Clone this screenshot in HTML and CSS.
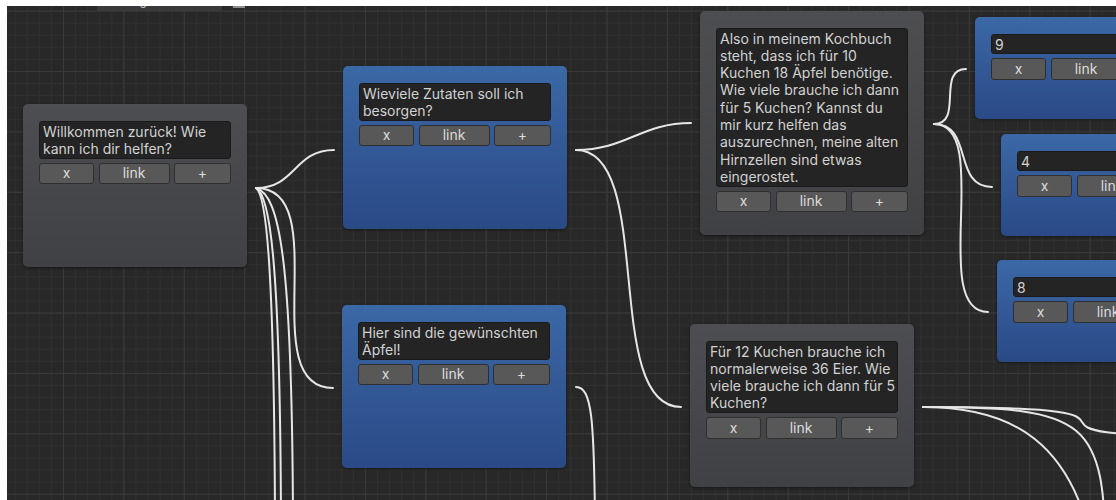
FILE: index.html
```html
<!DOCTYPE html>
<html lang="de">
<head>
<meta charset="utf-8">
<title>Dialog Graph</title>
<link rel="stylesheet" href="styles.css">
</head>
<body>
<div class="graph-view">
  <svg class="edges" viewBox="7 6 1109 494" width="1109" height="494" aria-hidden="true">
    <g class="edge">
      <!-- Willkommen -> outputs -->
      <path d="M256 188 C296 188 294 150 334 150"/>
      <path d="M256 188 C336 188 253 388 333 388"/>
      <path d="M256 188 C266 195 274 260 275 520"/>
      <path d="M256 188 C270 195 280 260 281 520"/>
      <path d="M256 188 C280 195 292 260 293 520"/>
      <!-- Zutaten -> outputs -->
      <path d="M576 150 C626 150 641 123 691 123"/>
      <path d="M576 150 C656 150 601 407 681 407"/>
      <!-- Äpfel -> output -->
      <path d="M576 387 C592 387 594 420 595 520"/>
      <!-- Kochbuch -> answers -->
      <path d="M934 124 C964 124 936 69 966 69"/>
      <path d="M934 124 C974 124 952 187 992 187"/>
      <path d="M934 124 C994 124 928 312 988 312"/>
      <!-- Eier -> outputs -->
      <path d="M923 407 C1223 407 941 437 1241 437"/>
      <path d="M923 407 C1010 407 1075 440 1095 560"/>
      <path d="M923 407 C1090 407 1104 420 1106 560"/>
    </g>
  </svg>

  <div class="toolbar-field"><span>Dialog</span></div>
  <div class="toolbar-knob"></div>

  <div class="node node--gray n-welcome">
    <div class="node__text">Willkommen zurück! Wie kann ich dir helfen?</div>
    <div class="node__actions"><button class="btn">x</button><button class="btn">link</button><button class="btn">+</button></div>
  </div>

  <div class="node node--blue n-zutaten">
    <div class="node__text">Wieviele Zutaten soll ich besorgen?</div>
    <div class="node__actions"><button class="btn">x</button><button class="btn">link</button><button class="btn">+</button></div>
  </div>

  <div class="node node--blue n-aepfel">
    <div class="node__text">Hier sind die gewünschten Äpfel!</div>
    <div class="node__actions"><button class="btn">x</button><button class="btn">link</button><button class="btn">+</button></div>
  </div>

  <div class="node node--gray node--tall n-kochbuch">
    <div class="node__text">Also in meinem Kochbuch steht, dass ich für 10 Kuchen 18 Äpfel benötige. Wie viele brauche ich dann für 5 Kuchen? Kannst du mir kurz helfen das auszurechnen, meine alten Hirnzellen sind etwas eingerostet.</div>
    <div class="node__actions"><button class="btn">x</button><button class="btn">link</button><button class="btn">+</button></div>
  </div>

  <div class="node node--gray n-eier">
    <div class="node__text">Für 12 Kuchen brauche ich normalerweise 36 Eier. Wie viele brauche ich dann für 5 Kuchen?</div>
    <div class="node__actions"><button class="btn">x</button><button class="btn">link</button><button class="btn">+</button></div>
  </div>

  <div class="node node--blue node--short n-answer-9">
    <div class="node__text">9</div>
    <div class="node__actions"><button class="btn">x</button><button class="btn">link</button><button class="btn">+</button></div>
  </div>

  <div class="node node--blue node--short n-answer-4">
    <div class="node__text">4</div>
    <div class="node__actions"><button class="btn">x</button><button class="btn">link</button><button class="btn">+</button></div>
  </div>

  <div class="node node--blue node--short n-answer-8">
    <div class="node__text">8</div>
    <div class="node__actions"><button class="btn">x</button><button class="btn">link</button><button class="btn">+</button></div>
  </div>
</div>
</body>
</html>
```

FILE: styles.css
```css
html, body {
  margin: 0;
  padding: 0;
  background: #ffffff;
}

body {
  width: 1116px;
  height: 500px;
  overflow: hidden;
  font-family: Inter, "Noto Sans", "Liberation Sans", sans-serif;
}

/* editor canvas with a two-level grid */
.graph-view {
  position: relative;
  margin: 6px 0 0 7px;
  width: 1109px;
  height: 494px;
  overflow: hidden;
  background-color: #282828;
  background-image:
    linear-gradient(to right, #3a3a3a 1px, transparent 1px),
    linear-gradient(to bottom, #3a3a3a 1px, transparent 1px),
    linear-gradient(to right, #303030 1px, transparent 1px),
    linear-gradient(to bottom, #303030 1px, transparent 1px);
  background-size: 60.4px 60.4px, 60.4px 60.4px, 12.08px 12.08px, 12.08px 12.08px;
  background-position: 56px 0, 0 4.6px, 7.7px 0, 0 4.6px;
}

.edges {
  position: absolute;
  left: 0;
  top: 0;
}

.edge path {
  fill: none;
  stroke: #e6e6e6;
  stroke-width: 2;
  stroke-linecap: round;
}

/* bottom edge of the toolbar that sits above the canvas */
.toolbar-field {
  position: absolute;
  left: 90px;
  top: -12px;
  width: 125px;
  height: 17px;
  background: #3a3a3a;
  overflow: hidden;
  color: #d0d0d0;
  font-size: 12px;
  line-height: 14px;
  padding-left: 14px;
  box-sizing: border-box;
}

.toolbar-knob {
  position: absolute;
  left: 226px;
  top: 0;
  width: 12px;
  height: 2px;
  background: #8c8c8c;
}

/* nodes */
.node {
  position: absolute;
  width: 224px;
  height: 163px;
  box-sizing: border-box;
  padding: 17px 16px 0;
  border-radius: 5px;
  display: flex;
  flex-direction: column;
  gap: 4px;
  box-shadow: 0 1px 3px rgba(0, 0, 0, 0.45);
}

.node--gray {
  background: linear-gradient(#4c4e52, #3f4145);
}

.node--blue {
  background: linear-gradient(#3b68a6, #2a4a86);
}

.node--tall {
  height: 224px;
}

.node--short {
  height: 102px;
}

.node__text {
  background: #242424;
  border: 1px solid #1a1a1a;
  border-radius: 3px;
  padding: 0.5px 2px 0.5px 3px;
  color: #d2d2d2;
  font-size: 14px;
  line-height: 17.3px;
}

.node__actions {
  display: grid;
  grid-template-columns: 55fr 71fr 57fr;
  column-gap: 4.5px;
}

.btn {
  height: 21.6px;
  margin: 0;
  padding: 0;
  background: #585858;
  border: 1px solid #2f2f2f;
  border-radius: 3px;
  color: #dcdcdc;
  font-family: inherit;
  font-size: 14px;
  line-height: 18px;
}

/* node placement on the canvas */
.n-welcome  { left: 16px;  top: 98px; }
.n-zutaten  { left: 336px; top: 60px; }
.n-aepfel   { left: 335px; top: 299px; }
.n-kochbuch { left: 693px; top: 5px; }
.n-eier     { left: 683px; top: 318px; }
.n-answer-9 { left: 968px; top: 11px; }
.n-answer-4 { left: 994px; top: 128px; }
.n-answer-8 { left: 990px; top: 254px; }
```
